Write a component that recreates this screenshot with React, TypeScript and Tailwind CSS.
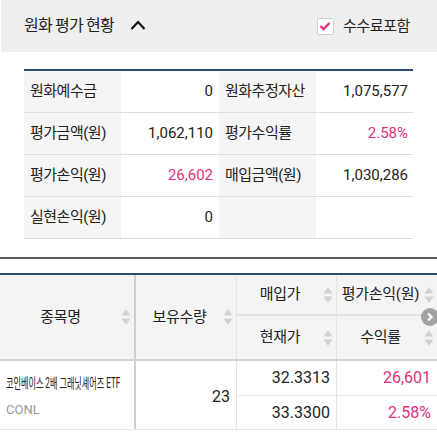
import React from "react";

const font = { fontFamily: "Roboto, 'Noto Sans CJK KR', sans-serif" };

const SortIcon = () => (
  <svg width="10" height="18" viewBox="0 0 10 18" className="shrink-0">
    <path d="M5 1 L9.5 7.5 L0.5 7.5 Z" fill="#d2d2d2" />
    <path d="M5 17 L9.5 10.5 L0.5 10.5 Z" fill="#d2d2d2" />
  </svg>
);

const summary = [
  ["원화예수금", "0", "원화추정자산", "1,075,577"],
  ["평가금액(원)", "1,062,110", "평가수익률", "2.58%"],
  ["평가손익(원)", "26,602", "매입금액(원)", "1,030,286"],
  ["실현손익(원)", "0", "", ""],
];

const pinkVals = ["2.58%", "26,602"];

const HeadCell = ({ label, className = "" }: { label: string; className?: string }) => (
  <div className={`flex items-center pr-[3px] ${className}`}>
    <span className="flex-1 text-center text-[15px] text-[#222] tracking-[-0.3px]">{label}</span>
    <SortIcon />
  </div>
);

const App = () => {
  return (
    <div className="w-[437px] h-[441px] bg-white overflow-hidden relative" style={font}>
      {/* 상단 헤더 */}
      <div className="h-[52px] ml-[1px] bg-[#efefef] flex items-center justify-between pl-[23px] pr-[27px]">
        <div className="flex items-center">
          <span className="text-[16px] text-[#222] tracking-[-0.8px]">원화 평가 현황</span>
          <svg width="16" height="10" viewBox="0 0 16 10" className="ml-[16px] mb-[2px]">
            <path d="M1.5 9 L8 2 L14.5 9" fill="none" stroke="#111" strokeWidth="2.2" />
          </svg>
        </div>
        <div className="flex items-center gap-[9px]">
          <div className="w-[17px] h-[17px] bg-white border border-[#cfcfcf] rounded-[2px] flex items-center justify-center">
            <svg width="12" height="10" viewBox="0 0 12 10">
              <path d="M1.5 5 L4.5 8 L10.5 2" fill="none" stroke="#e0307f" strokeWidth="2.4" />
            </svg>
          </div>
          <span className="text-[15px] text-[#222] tracking-[-0.4px]">수수료포함</span>
        </div>
      </div>

      {/* 요약 테이블 */}
      <div className="mt-[17px] mx-[24px] border-t-2 border-[#2d4b73]">
        {summary.map((row, i) => (
          <div key={i} className="grid grid-cols-[97px_98px_97px_98px] h-[42px] border-b border-[#dedede] text-[15px] text-[#222]">
            <div className="bg-[#f5f5f5] flex items-center pl-[6px] tracking-[-0.5px]">{row[0]}</div>
            <div className={`flex items-center justify-end pr-[6px] ${pinkVals.includes(row[1]) ? "text-[#e0307f]" : ""}`}>{row[1]}</div>
            <div className="bg-[#f5f5f5] flex items-center pl-[6px] tracking-[-0.5px]">{row[2]}</div>
            <div className={`flex items-center justify-end pr-[6px] ${pinkVals.includes(row[3]) ? "text-[#e0307f]" : ""}`}>{row[3]}</div>
          </div>
        ))}
      </div>

      {/* 구분선 */}
      <div className="mt-[18px] border-t-2 border-[#5a5a5a]" />

      {/* 보유 종목 테이블 */}
      <div className="mt-[14px] border-t-2 border-[#2d4b73] relative">
        <div className="grid grid-cols-[136px_101px_100px_100px] grid-rows-[41px_43px] bg-[#f4f4f4] border-b-2 border-[#d4d4d4]">
          <HeadCell label="종목명" className="row-span-2 border-r-2 border-[#cfcfcf]" />
          <HeadCell label="보유수량" className="row-span-2 border-r border-[#e4e4e4]" />
          <HeadCell label="매입가" className="border-r border-[#e4e4e4] border-b-2 border-b-[#e2e2e2]" />
          <HeadCell label="평가손익(원)" className="border-b-2 border-b-[#e2e2e2]" />
          <HeadCell label="현재가" className="border-r border-[#e4e4e4]" />
          <HeadCell label="수익률" />
        </div>
        <div className="absolute right-[-2px] top-[33px] w-[18px] h-[18px] rounded-full bg-[#a3a3a3] flex items-center justify-center">
          <svg width="8" height="10" viewBox="0 0 8 10">
            <path d="M2 1.5 L5.5 5 L2 8.5" fill="none" stroke="#fff" strokeWidth="2.2" />
          </svg>
        </div>

        <div className="grid grid-cols-[136px_101px_100px_100px] h-[69px] border-b border-[#e6e6e6]">
          <div className="border-r-2 border-[#cfcfcf] pl-[6px] pt-[10px] overflow-hidden">
            <div className="text-[14px] text-[#222] whitespace-nowrap inline-block origin-left scale-x-[0.58]">코인베이스 2배 그래닛셰어즈 ETF</div>
            <div className="text-[13px] text-[#999] mt-[5px]">CONL</div>
          </div>
          <div className="border-r border-[#e4e4e4] flex items-center justify-end pr-[6px] pt-[4px] text-[16px] text-[#222]">23</div>
          <div className="border-r border-[#e4e4e4] flex flex-col text-[16px] text-[#222]">
            <div className="h-[35px] flex items-center justify-end pr-[6px] border-b border-[#e6e6e6]">32.3313</div>
            <div className="flex-1 flex items-center justify-end pr-[6px]">33.3300</div>
          </div>
          <div className="flex flex-col text-[16px] text-[#e0307f]">
            <div className="h-[35px] flex items-center justify-end pr-[6px] border-b border-[#e6e6e6]">26,601</div>
            <div className="flex-1 flex items-center justify-end pr-[6px]">2.58%</div>
          </div>
        </div>
      </div>
    </div>
  );
};

export default App;
